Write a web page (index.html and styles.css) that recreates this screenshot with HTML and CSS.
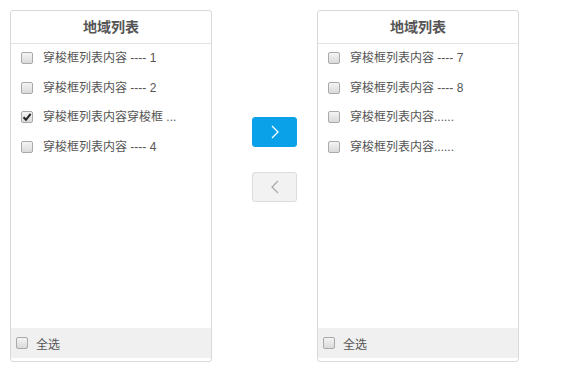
FILE: index.html
```html
<!DOCTYPE html>
<html lang="zh-CN">
<head>
  <meta charset="UTF-8">
  <title>穿梭框</title>
  <link rel="stylesheet" href="styles.css">
</head>
<body>
  <div class="transfer">
    <div class="panel">
      <div class="panel-head">地域列表</div>
      <ul class="panel-list">
        <li><span class="chk"></span>穿梭框列表内容 ---- 1</li>
        <li><span class="chk"></span>穿梭框列表内容 ---- 2</li>
        <li><span class="chk checked"><svg width="10" height="10" viewBox="0 0 10 10"><path d="M1.5 5.2 L4 7.8 L8.6 1.8" fill="none" stroke="#222" stroke-width="2"/></svg></span>穿梭框列表内容穿梭框 ...</li>
        <li><span class="chk"></span>穿梭框列表内容 ---- 4</li>
      </ul>
      <div class="panel-foot"><span class="chk"></span>全选</div>
    </div>

    <div class="ops">
      <button class="op-btn active">
        <svg width="12" height="16" viewBox="0 0 12 16"><path d="M3 2 L9 8 L3 14" fill="none" stroke="#fff" stroke-width="1.3"/></svg>
      </button>
      <button class="op-btn">
        <svg width="12" height="16" viewBox="0 0 12 16"><path d="M9 2 L3 8 L9 14" fill="none" stroke="#aaa" stroke-width="1.3"/></svg>
      </button>
    </div>

    <div class="panel">
      <div class="panel-head">地域列表</div>
      <ul class="panel-list">
        <li><span class="chk"></span>穿梭框列表内容 ---- 7</li>
        <li><span class="chk"></span>穿梭框列表内容 ---- 8</li>
        <li><span class="chk"></span>穿梭框列表内容......</li>
        <li><span class="chk"></span>穿梭框列表内容......</li>
      </ul>
      <div class="panel-foot"><span class="chk"></span>全选</div>
    </div>
  </div>
</body>
</html>
```

FILE: styles.css
```css
body {
  margin: 0;
  padding: 0;
  background: #fff;
  font-family: "Liberation Sans", "Noto Sans CJK SC", sans-serif;
  font-size: 12px;
  color: #555;
}

.transfer {
  display: flex;
  align-items: flex-start;
  padding: 10px 0 0 10px;
}

.panel {
  width: 202px;
  height: 352px;
  box-sizing: border-box;
  border: 1px solid #d9d9d9;
  border-radius: 3px;
  display: flex;
  flex-direction: column;
}

.panel-head {
  height: 32px;
  line-height: 32px;
  border-bottom: 1px solid #e2e2e2;
  text-align: center;
  font-size: 14px;
  font-weight: bold;
  color: #555;
}

.panel-list {
  flex: 1;
  list-style: none;
  margin: 0;
  padding: 4px 0 0 10px;
  display: flex;
  flex-direction: column;
  gap: 9.6px;
}

.panel-list li {
  height: 20px;
  line-height: 20px;
  display: flex;
  align-items: center;
  white-space: nowrap;
}

.panel-list .chk {
  margin-right: 10px;
}

.panel-foot {
  height: 30px;
  margin-bottom: 3px;
  background: #f0f0f0;
  display: flex;
  align-items: center;
  padding-left: 5px;
}

.panel-foot .chk {
  margin-right: 8px;
}

.chk {
  width: 12px;
  height: 12px;
  box-sizing: border-box;
  border: 1px solid #a9a9a9;
  border-radius: 2px;
  background: linear-gradient(to bottom, #f4f4f4, #dadada);
  display: inline-flex;
  align-items: center;
  justify-content: center;
  flex-shrink: 0;
}

.ops {
  display: flex;
  flex-direction: column;
  gap: 25px;
  padding-top: 107px;
  margin: 0 20px 0 40px;
}

.op-btn {
  width: 45px;
  height: 30px;
  padding: 0;
  border: 1px solid #dcdcdc;
  border-radius: 3px;
  background: #f2f2f2;
  display: flex;
  align-items: center;
  justify-content: center;
  cursor: pointer;
}

.op-btn.active {
  background: #0aa1e8;
  border-color: #0aa1e8;
}
```
